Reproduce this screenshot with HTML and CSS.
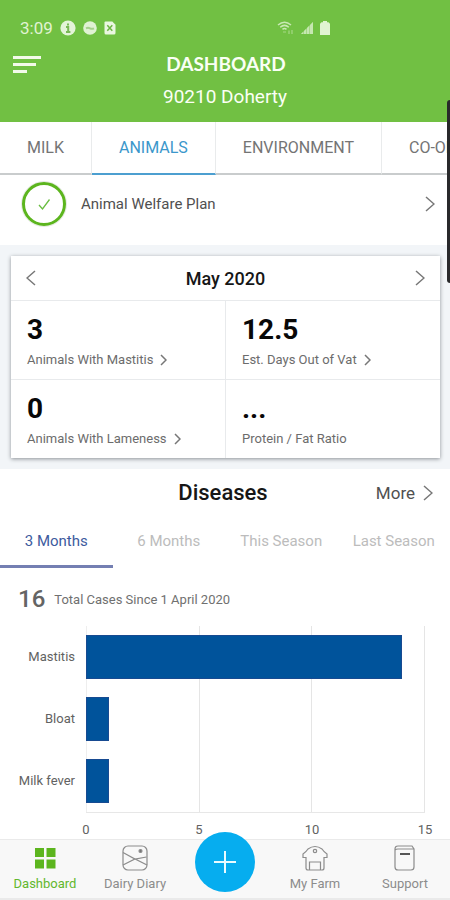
FILE: index.html
```html
<!DOCTYPE html>
<html lang="en">
<head>
<meta charset="utf-8">
<meta name="viewport" content="width=device-width, initial-scale=1">
<title>Dashboard</title>
<link rel="stylesheet" href="styles.css">
</head>
<body>
<div class="app">
  <header class="header">
    <div class="status">
      <div class="status-left">
        <span class="clock">3:09</span>
        <svg width="16" height="16" viewBox="0 0 16 16"><circle cx="8" cy="8" r="7.6" fill="#e4f4d8"/><path d="M8 3.4v2M6 7h2.2v5M6 12h4.4" stroke="#79b955" stroke-width="2" fill="none"/></svg>
        <svg width="14" height="14" viewBox="0 0 14 14"><circle cx="7" cy="7" r="6.8" fill="#e0f2d3"/><path d="M3 7.300q2-1 4 0t4 0" stroke="#a5d18a" stroke-width="2" fill="none"/></svg>
        <svg class="file-icon" width="12" height="14" viewBox="0 0 12 14"><path d="M1.5.5h6.8l3.2 3.2v8.3q0 1.5-1.5 1.5H2Q.5 13.500.5 12V1.500q0-1 1-1z" fill="#eaf7e0"/><path d="M3.300 4.300l5 5.400M8.300 4.300l-5 5.400" stroke="#6bb540" stroke-width="1.500"/></svg>
      </div>
      <div class="status-right">
        <svg width="17" height="14" viewBox="0 0 17 14" fill="none" stroke="#c9e8b4" stroke-width="1.500"><path d="M1 4q6.500-5.500 13 0M3.200 6.200q4.300-3.700 8.600 0M5.500 8.400q2-1.700 4 0"/><path d="M6 11h3M12 13V9.500M15 9v4" stroke-width="1.200" stroke="#a5d785"/></svg>
        <svg width="12" height="12" viewBox="0 0 12 12"><path d="M0 12h2v-2zM3 12h2V7L3 9zM6 12h2V4L6 6zM9 12h3V0L9 3z" fill="#c6e7b1"/><path d="M0 12L12 0v12z" fill="#c6e7b1" opacity=".6"/></svg>
        <svg width="10" height="14" viewBox="0 0 10 14"><path d="M3 0h4v1.200h1.500q1.500 1 1.500 2V14H0V3.200q0-1 1.500-2H3z" fill="#e0f4d2"/></svg>
      </div>
    </div>
    <div class="title-row">
      <button class="menu" aria-label="Menu"><svg width="29" height="20" viewBox="0 0 29 20" stroke="#f2fae9" stroke-width="3.200"><path d="M1 3.500h28M1 10.500h23M1 17.500h14"/></svg></button>
      <h1>DASHBOARD</h1>
    </div>
    <p class="farm-name">90210 Doherty</p>
  </header>

  <nav class="tabs" aria-label="Sections">
    <a class="tab" href="#milk">MILK</a>
    <a class="tab active" href="#animals">ANIMALS</a>
    <a class="tab" href="#environment">ENVIRONMENT</a>
    <a class="tab" href="#co-op">CO-OP</a>
  </nav>

  <main>
    <a class="welfare" href="#plan">
      <svg width="46" height="46" viewBox="0 0 46 46" fill="none"><circle cx="23" cy="23" r="22.500" stroke="#e4e9e2"/><circle cx="23" cy="23" r="20.500" stroke="#5cb51e" stroke-width="3"/><path d="M18 24l3.500 4L28.500 18.500" stroke="#69bd40" stroke-width="1.300"/></svg>
      <span class="welfare-name">Animal Welfare Plan</span>
      <svg width="10" height="16" viewBox="0 0 10 16" class="chev"><path d="M1 1l8 7-8 7"/></svg>
    </a>

    <section class="summary">
      <div class="card">
        <div class="month">
          <button aria-label="Previous month"><svg width="10" height="16" viewBox="0 0 10 16" class="chev"><path d="M9 1L1 8l8 7"/></svg></button>
          <h2>May 2020</h2>
          <button aria-label="Next month"><svg width="10" height="16" viewBox="0 0 10 16" class="chev"><path d="M1 1l8 7-8 7"/></svg></button>
        </div>
        <div class="stats">
          <a class="stat" href="#mastitis"><strong>3</strong><span>Animals With Mastitis <svg width="7" height="12" viewBox="0 0 7 12" class="chev"><path d="M1 1l5 5-5 5"/></svg></span></a>
          <a class="stat" href="#vat"><strong>12.5</strong><span>Est. Days Out of Vat <svg width="7" height="12" viewBox="0 0 7 12" class="chev"><path d="M1 1l5 5-5 5"/></svg></span></a>
          <a class="stat" href="#lameness"><strong>0</strong><span>Animals With Lameness <svg width="7" height="12" viewBox="0 0 7 12" class="chev"><path d="M1 1l5 5-5 5"/></svg></span></a>
          <div class="stat"><strong>...</strong><span>Protein / Fat Ratio</span></div>
        </div>
      </div>
    </section>

    <section class="diseases">
      <div class="section-head">
        <h2>Diseases</h2>
        <a class="more" href="#more">More <svg width="10" height="16" viewBox="0 0 10 16" class="chev"><path d="M1 1l8 7-8 7"/></svg></a>
      </div>
      <div class="periods">
        <button class="period active">3 Months</button>
        <button class="period">6 Months</button>
        <button class="period">This Season</button>
        <button class="period">Last Season</button>
      </div>
      <p class="total"><strong>16</strong> Total Cases Since 1 April 2020</p>
      <div class="chart">
        <div class="names"><span>Mastitis</span><span>Bloat</span><span>Milk fever</span></div>
        <div class="plot">
          <div class="grid"><i></i><i></i><i></i></div>
          <div class="bars">
            <div class="bar" style="width:93.33%"></div>
            <div class="bar" style="width:6.67%"></div>
            <div class="bar" style="width:6.67%"></div>
          </div>
        </div>
        <div class="axis"><span>0</span><span>5</span><span>10</span><span>15</span></div>
      </div>
    </section>
  </main>

  <nav class="bottom" aria-label="Main">
    <a class="item active" href="#dashboard">
      <svg width="26" height="26" viewBox="0 0 26 26" fill="#5cb51e"><path d="M3 3h9v9H3zM14.500 3h9v9h-9zM3 14.500h9v9H3zM14.500 14.500h9v9h-9z"/></svg>
      Dashboard</a>
    <a class="item" href="#diary">
      <svg width="26" height="26" viewBox="0 0 26 26" class="line"><rect x="1" y="1" width="24" height="24" rx="5"/><path d="M1 7.500L13 14l11.500-2M1 20L13 14l12 6"/><circle cx="18.500" cy="6" r="1.500" fill="#777"/></svg>
      Dairy Diary</a>
    <button class="add" aria-label="Add"><svg width="22" height="22" viewBox="0 0 22 22" stroke="#e9fbff" stroke-width="2"><path d="M11 0v22M0 11h22"/></svg></button>
    <a class="item" href="#farm">
      <svg width="26" height="26" viewBox="0 0 26 26" class="line"><path d="M4 12.500H1V9q3-2 5-5 7-5 14 0 2 3 5 5v3.500h-3V23q0 2-2 2H6q-2 0-2-2z"/><path d="M7.500 25v-8h11v8"/><circle cx="13" cy="6" r="1.700"/></svg>
      My Farm</a>
    <a class="item" href="#support">
      <svg width="26" height="26" viewBox="0 0 26 26" class="line"><path d="M3 4q0-3 3-3h14l2 3v18q0 3-3 3H6q-3 0-3-3zM3 5q1-1 3-1h16"/><path d="M8 9h10" stroke="#555" stroke-width="2"/></svg>
      Support</a>
  </nav>
  <div class="edge-handle"></div>
</div>
</body>
</html>
```
FILE: styles.css
```css
* { box-sizing: border-box; }
body { margin: 0; font-family: Roboto, "Liberation Sans", sans-serif; color: #505050; background: #fff; }
h1, h2, p { margin: 0; }
a { color: inherit; text-decoration: none; }
button { border: 0; padding: 0; background: none; font: inherit; color: inherit; }
svg { display: block; flex: none; }
.chev { fill: none; stroke: #777; stroke-width: 1.5; }
.app { position: relative; min-height: 100vh; display: flex; flex-direction: column; overflow: hidden; }
main { flex: 1; }

.header { background: #71c043; color: #fafff5; padding: 16px 12px 14px; }
.status { display: flex; justify-content: space-between; align-items: center; height: 24px; padding: 0 108px 0 8px; }
.status-left, .status-right { display: flex; align-items: center; gap: 7px; }
.clock { font-size: 17px; color: #e0f3d2; }
.title-row { display: grid; grid-template-columns: 30px 1fr 28px; align-items: center; height: 46px; padding-top: 2px; }
h1 { font: 700 19px/24px Lato, sans-serif; text-align: center; }
.farm-name { font-size: 19px; line-height: 22px; text-align: center; }

.tabs { display: flex; height: 53px; }
.tab { flex: none; display: flex; align-items: center; padding: 0 27px; font-size: 16px; color: #747474; border-bottom: 2px solid #c9cccd; border-right: 1px solid #e9ebec; }
.tab.active { color: #3b97cb; border-bottom-color: #4c9fd0; }

.welfare { display: flex; align-items: center; gap: 14px; height: 70px; padding: 0 15px 12px 21px; font-size: 15px; }
.welfare-name { flex: 1; }

.summary { background: #f2f5f8; padding: 11px 10px 11px 11px; }
.card { background: #fff; box-shadow: 0 1px 4px #8b9095; }
.month { display: flex; align-items: center; justify-content: space-between; height: 44px; padding: 0 15px; }
h2 { color: #161616; font-weight: 500; }
.month h2 { font-size: 18px; }
.stats { display: grid; grid-template-columns: 1fr 1fr; gap: 1px; background: #e8eaec; border-top: 1px solid #e8eaec; }
.stat { display: flex; flex-direction: column; background: #fff; height: 78px; padding: 13px 16px; }
.stat strong { font-size: 28px; line-height: 32px; font-weight: 700; color: #080808; }
.stat span { display: flex; align-items: center; gap: 7px; font-size: 13px; line-height: 28px; color: #6c6c6c; }

.section-head { display: grid; grid-template-columns: 1fr auto 1fr; align-items: center; height: 47px; padding: 0 17px 0 13px; }
.section-head h2 { grid-column: 2; font-size: 22px; }
.more { display: flex; align-items: center; justify-content: flex-end; gap: 8px; font-size: 17px; }
.periods { display: grid; grid-template-columns: repeat(4, 1fr); height: 52px; }
.period { padding-top: 1px; font-size: 15px; color: #bcbcbc; border-bottom: 3px solid transparent; }
.period.active { color: #3d5b9e; border-bottom-color: #747fb2; }
.total { display: flex; align-items: center; gap: 9px; height: 58px; padding: 4px 18px 0; font-size: 13px; color: #707070; }
.total strong { font-size: 24px; font-weight: 500; color: #646464; }
.chart { display: grid; grid-template-columns: 75px 1fr; column-gap: 11px; padding-right: 25px; color: #626262; }
.names { display: flex; flex-direction: column; padding: 9px 0; gap: 18px; text-align: right; font-size: 13px; line-height: 44px; }
.plot { display: grid; border-bottom: 1px solid #e7e7e7; }
.grid, .bars { grid-area: 1 / 1; }
.grid { display: grid; grid-template-columns: repeat(3, 1fr); border-left: 1px solid #eee; }
.grid i { border-right: 1px solid #e5e5e5; }
.bars { display: flex; flex-direction: column; gap: 18px; padding: 9px 0; z-index: 1; }
.bar { height: 44px; background: #00539b; outline: 1px solid #174a91; outline-offset: -1px; }
.axis { grid-column: 2; display: flex; justify-content: space-between; margin: 0 -10px; font-size: 13px; line-height: 16px; padding-top: 9px; }
.axis span { width: 20px; text-align: center; }

.bottom { position: relative; display: grid; grid-template-columns: repeat(5, 1fr); height: 61px; background: #f8f8f8; border-top: 1px solid #eaeaea; border-bottom: 2px solid #eaeaea; }
.item { display: flex; flex-direction: column; align-items: center; gap: 4px; padding-top: 5px; font-size: 13px; line-height: 18px; color: #8c8c8c; }
.item.active { color: #62b72d; }
.line { fill: none; stroke: #8c8c8c; stroke-width: 1.2; }
.add { display: flex; align-items: center; justify-content: center; justify-self: center; width: 60px; height: 60px; margin-top: -8px; border-radius: 50%; background: #06adef; }
.edge-handle { position: absolute; right: 0; top: 100px; width: 3px; height: 183px; background: #29292b; border-radius: 4px 0 0 4px; }
```
